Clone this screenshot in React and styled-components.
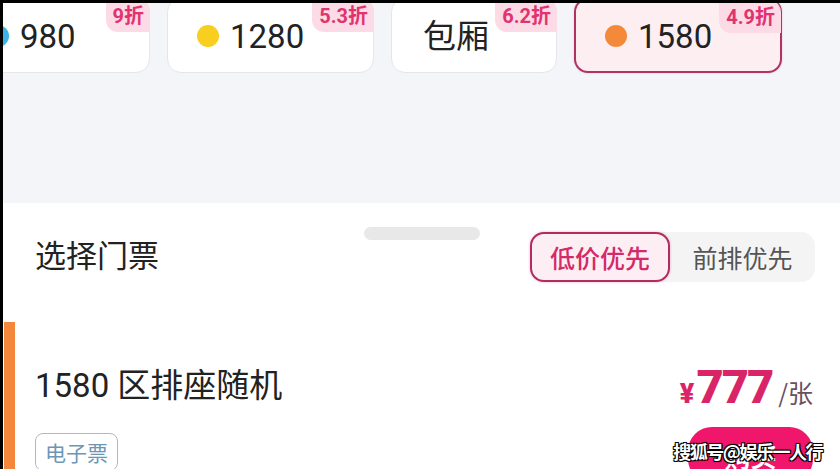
import styled, { createGlobalStyle } from "styled-components"

const GlobalStyle = createGlobalStyle`
    body {
        margin: 0;
        background: #ffffff;
        font-family: Roboto, "Noto Sans CJK SC", sans-serif;
    }
`

const areas = [
    { nome: "980", cor: "#3cb4e6", desconto: "9折", largura: 193 },
    { nome: "1280", cor: "#f8cf1e", desconto: "5.3折", largura: 207 },
    { nome: "包厢", cor: null, desconto: "6.2折", largura: 166 },
    { nome: "1580", cor: "#f5893a", desconto: "4.9折", largura: 208, ativo: true },
]

export default function App(){
    return(
        <>
        <GlobalStyle />
        <Tela>
            <TopoArea>
                <LinhaCartoes>
                    {areas.map(a => (
                        <Cartao key={a.nome} $largura={a.largura} $ativo={a.ativo} $semCor={!a.cor}>
                            {a.cor && <Bolinha $cor={a.cor} />}
                            <NomeArea>{a.nome}</NomeArea>
                            <Desconto>{a.desconto}</Desconto>
                        </Cartao>
                    ))}
                </LinhaCartoes>
            </TopoArea>

            <Folha>
                <Alca />
                <Cabecalho>
                    <TituloSecao>选择门票</TituloSecao>
                    <Segmentos>
                        <Segmento $ativo>低价优先</Segmento>
                        <Segmento>前排优先</Segmento>
                    </Segmentos>
                </Cabecalho>

                <Ingresso>
                    <ColunaInfo>
                        <NomeIngresso>1580 区排座随机</NomeIngresso>
                        <Etiqueta>电子票</Etiqueta>
                    </ColunaInfo>
                    <ColunaPreco>
                        <Preco>
                            <Moeda>¥</Moeda>
                            <Valor>777</Valor>
                            <Unidade>/张</Unidade>
                        </Preco>
                        <BotaoComprar>购买</BotaoComprar>
                    </ColunaPreco>
                </Ingresso>
            </Folha>

            <MarcaDagua>搜狐号@娱乐一人行</MarcaDagua>
        </Tela>
        </>
    )
}

const Tela = styled.div`
    position: relative;
    width: 840px;
    height: 469px;
    box-sizing: border-box;
    border-left: 3px solid #000000;
    border-top: 3px solid #000000;
    overflow: hidden;
    display: flex;
    flex-direction: column;
    background: #ffffff;
`
const TopoArea = styled.div`
    height: 200px;
    flex-shrink: 0;
    background: #f4f5f9;
`
const LinhaCartoes = styled.div`
    display: flex;
    gap: 17px;
    margin-top: -5px;
    margin-left: -46px;
`
const Cartao = styled.div`
    position: relative;
    flex-shrink: 0;
    box-sizing: border-box;
    width: ${p => p.$largura}px;
    height: 75px;
    display: flex;
    align-items: center;
    gap: 11px;
    padding-left: ${p => p.$semCor ? 31 : 29}px;
    background: ${p => p.$ativo ? "#fdeef2" : "#ffffff"};
    border: ${p => p.$ativo ? "2px solid #ae3463" : "1px solid #e6e6ea"};
    border-radius: 14px;
    box-shadow: ${p => p.$ativo ? "0 0 2px rgba(230, 60, 120, 0.35)" : "none"};
`
const Bolinha = styled.span`
    width: 22px;
    height: 22px;
    border-radius: 50%;
    background: ${p => p.$cor};
    flex-shrink: 0;
`
const NomeArea = styled.span`
    font-size: 33px;
    line-height: 40px;
    color: #222222;
    margin-top: 2px;
`
const Desconto = styled.span`
    position: absolute;
    top: -1px;
    right: -1px;
    height: 34px;
    padding: 0 6px 4px 7px;
    display: flex;
    align-items: flex-end;
    box-sizing: border-box;
    background: #fcdbe6;
    border-radius: 0 14px 0 12px;
    color: #e0336f;
    font-size: 20px;
    font-weight: 700;
    line-height: 24px;
`
const Folha = styled.div`
    flex: 1;
    background: #ffffff;
    display: flex;
    flex-direction: column;
    padding-top: 24px;
`
const Alca = styled.div`
    width: 116px;
    height: 13px;
    border-radius: 7px;
    background: #e8e8e8;
    margin: 0 auto;
`
const Cabecalho = styled.div`
    display: flex;
    align-items: center;
    justify-content: space-between;
    margin-top: -8px;
    padding: 0 25px 0 32px;
`
const TituloSecao = styled.h2`
    margin: 0 0 7px;
    font-family: "Noto Sans CJK SC", sans-serif;
    font-size: 31px;
    line-height: 40px;
    font-weight: 400;
    color: #222222;
`
const Segmentos = styled.div`
    display: flex;
    align-items: center;
    height: 50px;
    background: #f4f4f4;
    border-radius: 14px;
`
const Segmento = styled.div`
    box-sizing: border-box;
    height: 50px;
    display: flex;
    align-items: center;
    justify-content: center;
    width: ${p => p.$ativo ? 140 : 145}px;
    font-family: "Noto Sans CJK SC", sans-serif;
    font-size: 25px;
    font-weight: ${p => p.$ativo ? 500 : 400};
    color: ${p => p.$ativo ? "#d42a6a" : "#555555"};
    background: ${p => p.$ativo ? "#fdeef3" : "transparent"};
    border: ${p => p.$ativo ? "2px solid #b02d60" : "none"};
    border-radius: 14px;
    box-shadow: ${p => p.$ativo ? "0 0 3px rgba(235, 70, 130, 0.4)" : "none"};
`
const Ingresso = styled.div`
    margin-top: 40px;
    margin-left: 1px;
    flex: 1;
    display: flex;
    justify-content: space-between;
    border-left: 11px solid #f3873b;
    padding: 0 27px 0 20px;
`
const ColunaInfo = styled.div`
    display: flex;
    flex-direction: column;
    align-items: flex-start;
    padding-top: 44px;
`
const NomeIngresso = styled.div`
    font-size: 33px;
    line-height: 40px;
    color: #222222;
`
const Etiqueta = styled.span`
    margin-top: 27px;
    padding: 3px 9px;
    border: 1px solid #a7bccb;
    border-radius: 8px;
    font-family: "Noto Sans CJK SC", sans-serif;
    font-size: 21px;
    line-height: 30px;
    color: #6e96b4;
`
const ColunaPreco = styled.div`
    display: flex;
    flex-direction: column;
    align-items: flex-end;
    padding-top: 40px;
`
const Preco = styled.div`
    display: flex;
    align-items: baseline;
    height: 50px;
    line-height: 50px;
`
const Moeda = styled.span`
    font-size: 27px;
    font-weight: 900;
    color: #d92568;
    margin-right: 2px;
`
const Valor = styled.span`
    font-size: 47px;
    font-weight: 900;
    letter-spacing: -2px;
    color: #d92568;
`
const Unidade = styled.span`
    font-family: "Noto Sans CJK SC", sans-serif;
    font-size: 25px;
    color: #6b4f5f;
    margin-left: 6px;
`
const BotaoComprar = styled.button`
    margin-top: 15px;
    width: 125px;
    height: 56px;
    border: none;
    border-radius: 24px;
    background: #f0166b;
    color: #ffffff;
    font-family: "Noto Sans CJK SC", sans-serif;
    font-size: 26px;
    font-weight: 700;
    padding: 0;
`
const MarcaDagua = styled.div`
    position: absolute;
    right: 18px;
    bottom: 6px;
    font-family: "Noto Sans CJK SC", sans-serif;
    font-size: 18px;
    font-weight: 700;
    letter-spacing: -1.5px;
    line-height: 24px;
    color: #ffffff;
    text-shadow: -1px -1px 0 #000, 1px -1px 0 #000, -1px 1px 0 #000, 1px 1px 0 #000, 0 0 2px #000;
`
